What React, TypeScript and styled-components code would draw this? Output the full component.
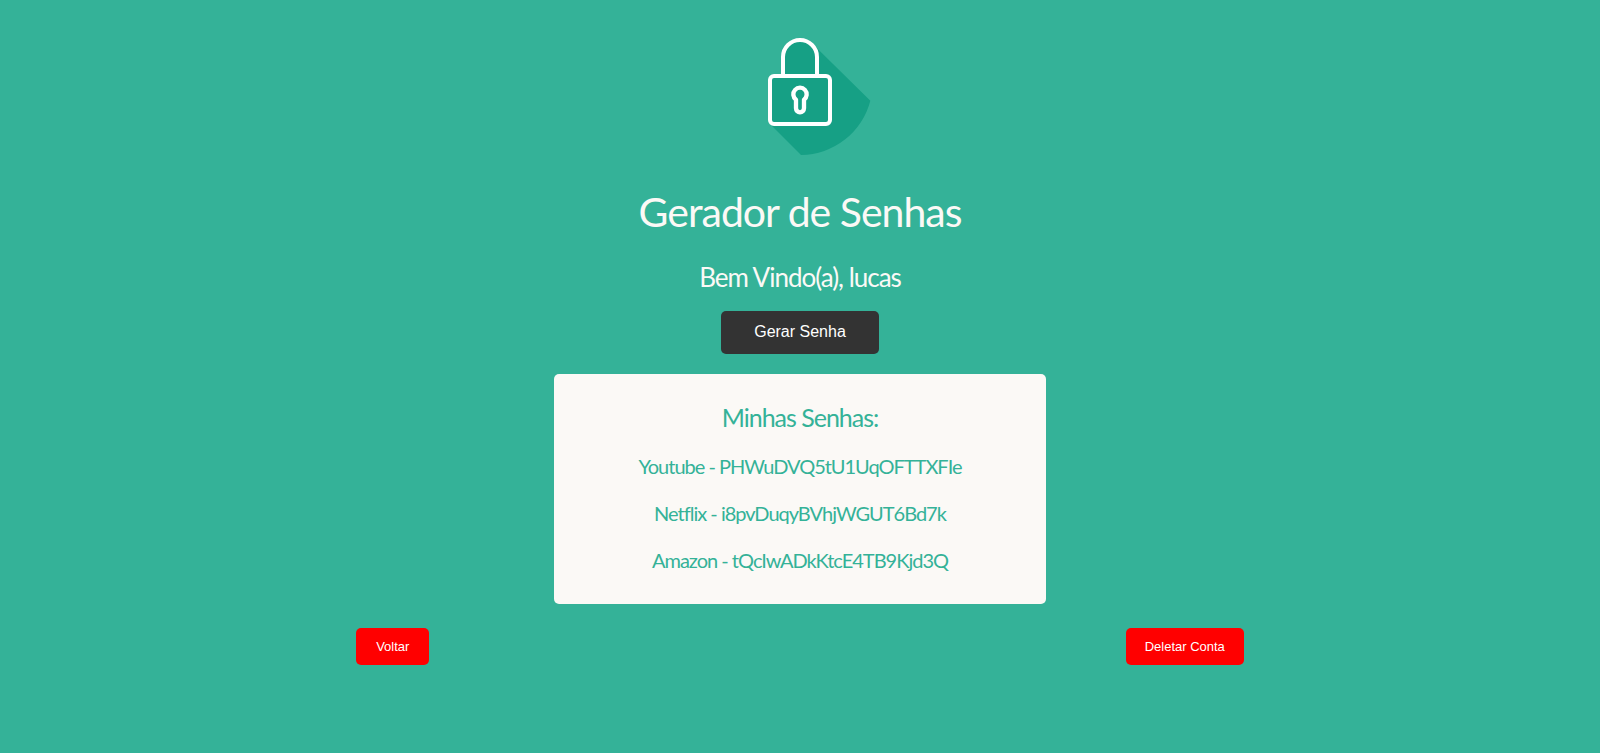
import React from "react";
import styled, { createGlobalStyle } from "styled-components";

const green = "#34b298";
const paper = "#fbf9f6";

const GlobalStyle = createGlobalStyle`
  body {
    margin: 8px;
    background: ${green};
    color: ${paper};
    font-family: Lato, sans-serif;
  }
`;

const Page = styled.main`
  display: flex;
  flex-direction: column;
  align-items: center;
  padding-top: 4px;
`;

const Logo = styled.svg`
  display: block;
  width: 144px;
  height: 144px;
`;

const Title = styled.h1`
  margin: 30px 0 0;
  font-size: 41px;
  line-height: 52px;
  font-weight: 400;
  letter-spacing: -1px;
`;

const Welcome = styled.h2`
  margin: 24px 0 0;
  font-size: 26px;
  line-height: 30px;
  font-weight: 400;
  letter-spacing: -1px;
`;

const Button = styled.button`
  border: 0;
  border-radius: 5px;
  color: #fff;
  font-family: "Liberation Sans", Arial, sans-serif;
  cursor: pointer;
`;

const GenerateButton = styled(Button)`
  margin-top: 19px;
  padding: 11px 33px 12px;
  background: #333;
  font-size: 16px;
  line-height: 20px;
`;

const DangerButton = styled(Button)<{ $inset: number }>`
  padding: 10px ${({ $inset }) => $inset}px;
  background: #f00;
  font-size: 13px;
  line-height: 17px;
`;

const Card = styled.section`
  box-sizing: border-box;
  width: 31%;
  margin-top: 20px;
  padding: 28px 16px 32px;
  border-radius: 5px;
  background: ${paper};
  color: ${green};
  text-align: center;
  letter-spacing: -1px;
`;

const CardTitle = styled.h2`
  margin: 0;
  font-size: 25px;
  line-height: 30px;
  font-weight: 400;
`;

const PasswordList = styled.ul`
  display: flex;
  flex-direction: column;
  gap: 23px;
  margin: 22px 0 0;
  padding: 0;
  list-style: none;
  font-size: 20px;
  line-height: 24px;
  font-weight: 400;
`;

const Actions = styled.footer`
  display: flex;
  justify-content: space-around;
  align-self: stretch;
  margin-top: 24px;
`;

const passwords = [
  { site: "Youtube", value: "PHWuDVQ5tU1UqOFTTXFIe" },
  { site: "Netflix", value: "i8pvDuqyBVhjWGUT6Bd7k" },
  { site: "Amazon", value: "tQcIwADkKtcE4TB9Kjd3Q" },
];

function LockLogo() {
  return (
    <Logo viewBox="-66 -39 432 432" aria-hidden="true">
      <path
        fill="#16a085"
        d="M150 45 C172 45 186 54 198 67 L361 227 A217 217 0 0 1 153 390 L60 297 V153 H99 V96 C99 68 122 45 150 45Z"
      />
      <g fill="none" stroke="#fff" strokeWidth="12">
        <rect x="60" y="153" width="180" height="144" rx="12" />
        <path d="M99 153 V96 a51 51 0 0 1 102 0 V153" />
        <path
          d="M138 224 a20 20 0 1 1 24 0 V250 a12 12 0 0 1 -24 0Z"
          strokeWidth="13"
          strokeLinejoin="round"
        />
      </g>
    </Logo>
  );
}

export default function App() {
  return (
    <>
      <GlobalStyle />
      <Page>
        <LockLogo />
        <Title>Gerador de Senhas</Title>
        <Welcome>Bem Vindo(a), lucas</Welcome>
        <GenerateButton type="button">Gerar Senha</GenerateButton>
        <Card>
          <CardTitle>Minhas Senhas:</CardTitle>
          <PasswordList>
            {passwords.map(({ site, value }) => (
              <li key={site}>
                {site} - {value}
              </li>
            ))}
          </PasswordList>
        </Card>
        <Actions>
          <DangerButton type="button" $inset={20}>Voltar</DangerButton>
          <DangerButton type="button" $inset={19}>Deletar Conta</DangerButton>
        </Actions>
      </Page>
    </>
  );
}
